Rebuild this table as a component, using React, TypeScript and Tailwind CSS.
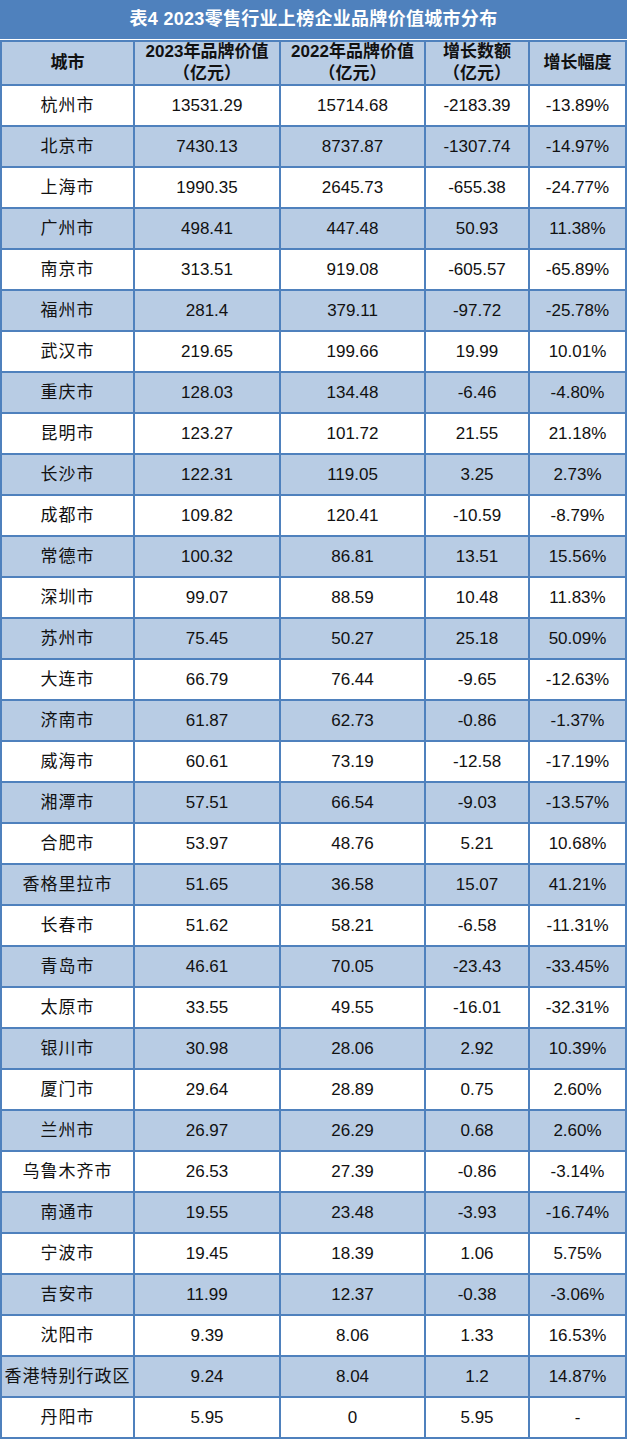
const rows: [string, string, string, string, string][] = [
  ["杭州市", "13531.29", "15714.68", "-2183.39", "-13.89%"],
  ["北京市", "7430.13", "8737.87", "-1307.74", "-14.97%"],
  ["上海市", "1990.35", "2645.73", "-655.38", "-24.77%"],
  ["广州市", "498.41", "447.48", "50.93", "11.38%"],
  ["南京市", "313.51", "919.08", "-605.57", "-65.89%"],
  ["福州市", "281.4", "379.11", "-97.72", "-25.78%"],
  ["武汉市", "219.65", "199.66", "19.99", "10.01%"],
  ["重庆市", "128.03", "134.48", "-6.46", "-4.80%"],
  ["昆明市", "123.27", "101.72", "21.55", "21.18%"],
  ["长沙市", "122.31", "119.05", "3.25", "2.73%"],
  ["成都市", "109.82", "120.41", "-10.59", "-8.79%"],
  ["常德市", "100.32", "86.81", "13.51", "15.56%"],
  ["深圳市", "99.07", "88.59", "10.48", "11.83%"],
  ["苏州市", "75.45", "50.27", "25.18", "50.09%"],
  ["大连市", "66.79", "76.44", "-9.65", "-12.63%"],
  ["济南市", "61.87", "62.73", "-0.86", "-1.37%"],
  ["威海市", "60.61", "73.19", "-12.58", "-17.19%"],
  ["湘潭市", "57.51", "66.54", "-9.03", "-13.57%"],
  ["合肥市", "53.97", "48.76", "5.21", "10.68%"],
  ["香格里拉市", "51.65", "36.58", "15.07", "41.21%"],
  ["长春市", "51.62", "58.21", "-6.58", "-11.31%"],
  ["青岛市", "46.61", "70.05", "-23.43", "-33.45%"],
  ["太原市", "33.55", "49.55", "-16.01", "-32.31%"],
  ["银川市", "30.98", "28.06", "2.92", "10.39%"],
  ["厦门市", "29.64", "28.89", "0.75", "2.60%"],
  ["兰州市", "26.97", "26.29", "0.68", "2.60%"],
  ["乌鲁木齐市", "26.53", "27.39", "-0.86", "-3.14%"],
  ["南通市", "19.55", "23.48", "-3.93", "-16.74%"],
  ["宁波市", "19.45", "18.39", "1.06", "5.75%"],
  ["吉安市", "11.99", "12.37", "-0.38", "-3.06%"],
  ["沈阳市", "9.39", "8.06", "1.33", "16.53%"],
  ["香港特别行政区", "9.24", "8.04", "1.2", "14.87%"],
  ["丹阳市", "5.95", "0", "5.95", "-"],
];

const headers = [
  ["城市"],
  ["2023年品牌价值", "（亿元）"],
  ["2022年品牌价值", "（亿元）"],
  ["增长数额", "（亿元）"],
  ["增长幅度"],
];

export default function App() {
  return (
    <div
      className="w-[627px] h-[1440px] bg-white"
      style={{ fontFamily: '"Liberation Sans", "Noto Sans CJK SC", sans-serif' }}
    >
      <div className="h-[39px] bg-[#4f81bd] flex items-center justify-center text-white font-bold text-[18px] tracking-[0.3px]">
        表4 2023零售行业上榜企业品牌价值城市分布
      </div>
      <div className="mt-[1px] bg-[#4f81bd] p-[2px] grid grid-cols-[131px_144px_143px_102px_95px] gap-[2px]">
        {headers.map((h, i) => (
          <div
            key={i}
            className="h-[42px] bg-[#b8cce4] flex flex-col items-center justify-center font-bold text-[17px] leading-[22px] text-[#111]"
          >
            {h.map((l, j) => (
              <span key={j}>{l}</span>
            ))}
          </div>
        ))}
        {rows.map((r, ri) =>
          r.map((c, ci) => (
            <div
              key={ri + "-" + ci}
              className={
                "h-[39px] flex items-center justify-center text-[17px] text-[#111] " +
                (ci === 0 ? "tracking-[1px] " : "") +
                (ri % 2 === 1 ? "bg-[#b8cce4]" : "bg-white")
              }
            >
              {c}
            </div>
          ))
        )}
      </div>
    </div>
  );
}
